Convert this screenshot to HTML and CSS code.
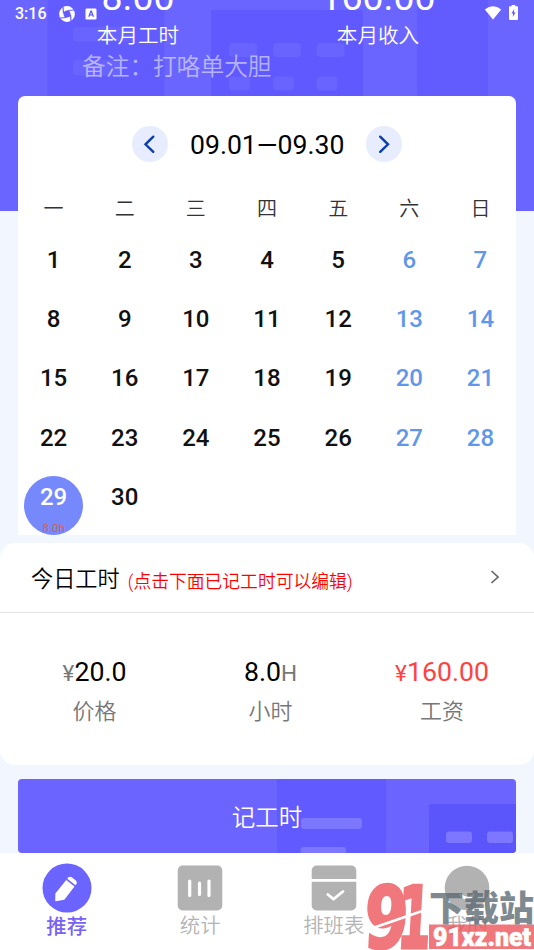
FILE: index.html
```html
<!DOCTYPE html>
<html lang="zh-CN">
<head>
<meta charset="utf-8">
<title>记工时</title>
<link rel="stylesheet" href="styles.css">
</head>
<body>
<div class="screen">
  <svg class="hero-art" viewBox="0 0 534 211" aria-hidden="true">
    <rect width="534" height="211" fill="#6b65ff"/>
    <rect x="47.500" width="117" height="211" fill="#625cff"/>
    <rect x="417" width="71" height="211" fill="#625cff"/>
    <path d="M211 211V12q0-2 2-2h148q2 0 2 2v199z" fill="#5f59ff"/>
    <g fill="#6963ff">
      <rect x="73" y="27" width="62" height="14.500" rx="4"/>
      <rect x="73" y="60" width="47" height="15.500" rx="4"/>
      <rect x="229" y="43" width="28" height="14" rx="4"/>
      <rect x="273" y="43" width="28" height="14" rx="4"/>
      <rect x="316.500" y="43" width="28" height="14" rx="4"/>
      <rect x="229" y="76.500" width="21" height="14" rx="4"/>
      <rect x="273" y="76.500" width="21" height="14" rx="4"/>
      <rect x="316.500" y="76.500" width="21" height="14" rx="4"/>
    </g>
  </svg>

  <div class="status">
    <span class="clock">3:16</span>
    <svg class="st-swirl" viewBox="0 0 16 16"><circle cx="8" cy="8" r="5.700" fill="none" stroke="#fff" stroke-width="4.400"/><g stroke="#6660ff" stroke-width="1.200"><path d="M4.500 7.500 4 1M8.500 4.500l6.500-.5M11.500 8.500 12 15M7.500 11.500 1 12"/></g></svg>
    <svg class="st-a" viewBox="0 0 12 12"><rect x=".5" y=".5" width="11" height="11" rx="1.200" fill="#fff"/><path d="M3.800 8.700 5.800 3h.6l2 5.700M4.500 6.800h3.200" fill="none" stroke="#5f59ff" stroke-width="1.200"/></svg>
    <span class="spacer"></span>
    <svg class="st-wifi" viewBox="0 0 18 14"><path d="M.8 3.500Q9-3 17.200 3.500L9 13.600z" fill="#fff"/></svg>
    <svg class="st-bat" viewBox="0 0 9 15"><path d="M2.700 1.200V0h3.600v1.200H8q1 0 1 1V14q0 1-1 1H1q-1 0-1-1V2.200q0-1 1-1z" fill="#fff"/><path d="M5.200 4 2.500 8.600h1.600L3.800 12l2.700-4.600H5z" fill="#5f59ff"/></svg>
  </div>

  <header class="hero">
    <div class="totals">
      <div class="total"><b>8.00</b><span>本月工时</span></div>
      <div class="total"><b>160.00</b><span>本月收入</span></div>
    </div>
    <p class="note">备注：打咯单大胆</p>
  </header>

  <section class="calendar">
    <div class="month">
      <button class="arrow"><svg viewBox="0 0 36 36"><path d="m21.300 10.700-7.800 7.600 7.800 7.500"/></svg></button>
      <span class="range">09.01—09.30</span>
      <button class="arrow"><svg viewBox="0 0 36 36"><path d="m14.200 10.700 7.800 7.600-7.800 7.500"/></svg></button>
    </div>
    <div class="week"><span>一</span><span>二</span><span>三</span><span>四</span><span>五</span><span>六</span><span>日</span></div>
    <div class="days">
      <span>1</span><span>2</span><span>3</span><span>4</span><span>5</span><span class="off">6</span><span class="off">7</span>
      <span>8</span><span>9</span><span>10</span><span>11</span><span>12</span><span class="off">13</span><span class="off">14</span>
      <span>15</span><span>16</span><span>17</span><span>18</span><span>19</span><span class="off">20</span><span class="off">21</span>
      <span>22</span><span>23</span><span>24</span><span>25</span><span>26</span><span class="off">27</span><span class="off">28</span>
      <span class="today">29<small>8.0h</small></span><span>30</span>
    </div>
  </section>

  <section class="panel">
    <div class="panel-head">
      <h2>今日工时</h2><em>(点击下面已记工时可以编辑)</em>
      <svg class="more" viewBox="0 0 10 14"><path d="m1.500 1 6.500 6-6.500 6"/></svg>
    </div>
    <div class="figures">
      <div class="figure price"><div class="value"><i>¥</i>20.0</div><div class="label">价格</div></div>
      <div class="figure hours"><div class="value">8.0<i>H</i></div><div class="label">小时</div></div>
      <div class="figure wage"><div class="value"><i>¥</i>160.00</div><div class="label">工资</div></div>
    </div>
  </section>

  <button class="record">
    <svg class="record-art" viewBox="0 0 498 74" aria-hidden="true">
      <rect x="259" width="109" height="74" fill="#605aff"/>
      <path d="M411 74V28q0-3 3-3h84v49z" fill="#5b55fc"/>
      <g fill="#7d77ff"><rect x="283" y="39" width="61" height="11" rx="3"/><path d="M282.500 74v-3q0-3 3-3H325q3 0 3 3v3z"/><rect x="428" y="52.500" width="26" height="11.500" rx="3"/><rect x="469" y="52.500" width="26" height="11.500" rx="3"/></g>
    </svg>
    <span>记工时</span>
  </button>

  <nav class="tabs">
    <a class="tab active"><svg viewBox="0 0 50 50"><circle cx="25" cy="25" r="24.500" fill="#6b64ff"/><path d="m24.200 17 8.300 6.500-10.200 13.300-8.500 1.400q-.6 0-.6-.7l.2-7z" fill="#fff"/><path d="m25.300 15.700 1-1.200q1.500-1.300 3.500-.2l4 3.200q1.800 1.700.7 3.500l-1 1.300z" fill="#fff"/></svg><span>推荐</span></a>
    <a class="tab"><svg viewBox="0 0 50 50"><rect x="2.700" y="2.500" width="44.600" height="45" rx="5" fill="#b2b2b2"/><path d="M14.700 18v14.500M24.500 20v11.500M34 18v14.500" stroke="#fff" stroke-width="3.200" stroke-linecap="round"/></svg><span>统计</span></a>
    <a class="tab"><svg viewBox="0 0 50 50"><rect x="2.700" y="2.500" width="44.600" height="45" rx="5" fill="#b2b2b2"/><path d="M2 17.300h46" stroke="#fff" stroke-width="2.700"/><path d="m18.800 31.500 5.700 4.700 9.500-7.700" fill="none" stroke="#fff" stroke-width="2.800" stroke-linecap="round" stroke-linejoin="round"/></svg><span>排班表</span></a>
    <a class="tab"><svg viewBox="0 0 50 50"><circle cx="25" cy="25" r="22.300" fill="#b2b2b2"/><path d="M18.500 32q6.500 6 13 0" fill="none" stroke="#fff" stroke-width="2.800" stroke-linecap="round"/></svg><span>我的</span></a>
  </nav>

  <svg class="watermark" viewBox="0 0 174 72">
    <g opacity=".78">
      <g class="wm-mark">
        <text transform="translate(3 69) skewX(-3)" textLength="44" lengthAdjust="spacingAndGlyphs">9</text>
        <text transform="translate(36 69) skewX(-3)" textLength="34" lengthAdjust="spacingAndGlyphs">1</text>
      </g>
      <rect x="69" y="45.500" width="106" height="24.500" fill="#ed5258"/>
      <text class="wm-name" x="69" y="41.500" textLength="105" lengthAdjust="spacingAndGlyphs">下载站</text>
    </g>
    <path d="M10 50 68 30" stroke="#fff" stroke-width="2.500"/>
    <text class="wm-url" x="73" y="66.500" textLength="98" lengthAdjust="spacingAndGlyphs">91xz.net</text>
  </svg>
</div>
</body>
</html>
```
FILE: styles.css
```css
* { box-sizing: border-box; }
body { margin: 0; font-family: Roboto, "Noto Sans CJK SC", sans-serif; font-weight: 400; }
button { border: 0; padding: 0; font: inherit; }
.screen { position: relative; width: 534px; height: 950px; overflow: hidden; background: #f1f6ff; display: flex; flex-direction: column; }
.hero-art { position: absolute; top: 0; left: 0; width: 534px; height: 211px; }

.status { position: absolute; top: 0; left: 0; width: 100%; height: 28px; padding: 0 15px; display: flex; align-items: center; color: #fff; }
.clock { font-size: 16px; font-weight: 500; line-height: 28px; width: 44px; }
.st-swirl { width: 16px; height: 16px; }
.st-a { width: 12px; height: 12px; margin-left: 10px; }
.spacer { flex: 1; }
.st-wifi { width: 18px; height: 14px; margin-top: -3px; }
.st-bat { width: 9px; height: 15px; margin: -3px 1px 0 7px; }

.hero { position: relative; height: 96px; flex: none; color: #fff; }
.totals { display: flex; padding: 0 8px 0 18px; height: 50px; }
.total { width: 240px; display: flex; flex-direction: column; align-items: center; }
.total b { font-size: 37.500px; font-weight: 400; line-height: 44px; margin-top: -25px; }
.total span { font-size: 20.600px; font-weight: 350; line-height: 30px; margin-top: 2px; }
.note { margin: 0; padding-left: 82px; font-size: 23.700px; font-weight: 350; line-height: 34px; color: rgba(255, 255, 255, .55); }

.calendar { position: relative; flex: none; width: 498px; height: 439px; margin-left: 18px; background: #fff; border-radius: 7px 7px 0 0; }
.month { display: flex; justify-content: center; align-items: center; height: 96px; gap: 22px; }
.arrow { width: 36px; height: 36px; border-radius: 50%; background: #e7ecff; }
.arrow svg { display: block; width: 36px; height: 36px; fill: none; stroke: #0b3ea8; stroke-width: 2.400; stroke-linecap: round; }
.range { width: 154px; text-align: center; font-size: 26.600px; white-space: nowrap; color: #000; }
.week { display: grid; grid-template-columns: repeat(7, 1fr); text-align: center; height: 46.700px; line-height: 34px; font-size: 20px; font-weight: 350; color: #333; }
.days { display: grid; grid-template-columns: repeat(7, 1fr); grid-auto-rows: 59.300px; justify-items: center; }
.days > span { width: 59.300px; height: 59.300px; text-align: center; font-size: 24px; font-weight: 500; line-height: 42px; color: #111; }
.days > .off { color: #5f97ea; }
.days > .today { display: flex; flex-direction: column; border-radius: 50%; background: #7589fd; color: #fff; }
.today small { font-size: 11.500px; font-weight: 400; line-height: 12px; margin-top: 4px; color: #d5634b; }

.panel { flex: none; height: 222px; margin-top: 8px; background: #fff; border-radius: 15px; }
.panel-head { display: flex; align-items: center; height: 70px; padding: 0 34px 0 31px; border-bottom: 1px solid #e2e2e2; }
.panel-head h2 { margin: -2px 0 0; font-size: 22.200px; font-weight: 350; color: #000; }
.panel-head em { margin: 5px 0 0 8px; font-size: 17.800px; font-weight: 350; font-style: normal; color: #f00; white-space: nowrap; }
.more { margin: -2px 0 0 auto; width: 10px; height: 14px; fill: none; stroke: #666; stroke-width: 1.700; }
.figures { display: flex; padding-top: 41px; }
.figure { display: flex; flex-direction: column; align-items: center; }
.price { width: 189px; }
.hours { width: 163px; }
.wage { width: 180px; }
.value { font-size: 26.700px; line-height: 36px; color: #000; }
.value i { font-size: 22.500px; font-style: normal; color: #777; }
.wage .value, .wage .value i { color: #ff4141; }
.label { font-size: 22px; font-weight: 350; line-height: 32px; margin-top: 5px; color: #777; }

.record { position: relative; flex: none; width: 498px; height: 74px; margin: 14px 0 0 18px; border-radius: 4px; overflow: hidden; background: #6b64ff; color: #fff; font-size: 23.500px; font-weight: 350; line-height: 78px; }
.record-art { position: absolute; left: 0; top: 0; width: 498px; height: 74px; }
.record span { position: relative; }

.tabs { flex: 1; display: grid; grid-template-columns: repeat(4, 1fr); background: #fff; padding-top: 9.500px; }
.tab { display: flex; flex-direction: column; align-items: center; font-size: 20.400px; font-weight: 350; line-height: 26px; color: #b4b4b4; }
.tab svg { width: 50px; height: 50px; display: block; }
.tab.active { color: #7862f2; font-weight: 500; }
.tab.active span { padding-top: 1px; }
.watermark { position: absolute; left: 360px; top: 879px; width: 174px; height: 72px; }
.wm-mark { font: bold 86px "DejaVu Sans", sans-serif; fill: #ed5258; stroke: #ed5258; stroke-width: 3px; }
.wm-name { font: 900 35px "Noto Sans CJK SC", sans-serif; fill: #5b6972; }
.wm-url { font: 900 26px Roboto, sans-serif; fill: #fff; stroke: #fff; stroke-width: .6px; }
```
